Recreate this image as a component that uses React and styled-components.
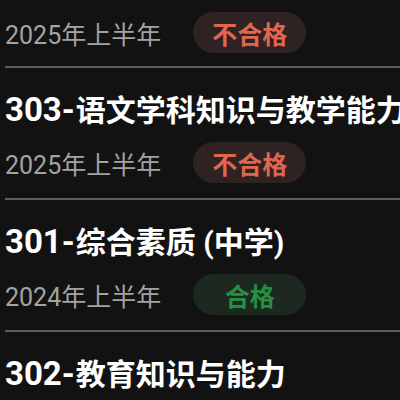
import React from "react";
import styled, { createGlobalStyle } from "styled-components";

const Global = createGlobalStyle`
  html, body {
    margin: 0;
    padding: 0;
    background: #121212;
  }
  body {
    width: 400px;
    height: 400px;
    overflow: hidden;
    font-family: Roboto, "Noto Sans CJK SC", sans-serif;
  }
`;

const List = styled.div`
  display: flex;
  flex-direction: column;
  margin-left: 5px;
`;

const Item = styled.div`
  display: flex;
  flex-direction: column;
  padding: ${(p) => (p.$partial ? "12px 0 13px" : "20px 0 15px")};
  border-bottom: 2px solid #5c5c5c;
`;

const Title = styled.div`
  font-family: Roboto, "Noto Sans CJK SC", sans-serif;
  font-size: 30px;
  font-weight: 700;
  line-height: 44px;
  height: 44px;
  color: #ffffff;
  white-space: nowrap;
  margin-bottom: 10px;
`;

const Code = styled.span`
  font-size: 33px;
  margin-right: 1px;
`;

const Meta = styled.div`
  display: flex;
  align-items: center;
  gap: 32px;
  height: 41px;
`;

const Year = styled.span`
  font-family: Roboto, "Noto Sans CJK SC", sans-serif;
  font-size: 25px;
  font-weight: 400;
  color: #a3a3a3;
  white-space: nowrap;
  margin-top: 1px;
`;

const Badge = styled.span`
  display: flex;
  align-items: center;
  justify-content: center;
  width: 113px;
  height: 41px;
  border-radius: 21px;
  font-family: "Noto Sans CJK SC", sans-serif;
  font-size: 25px;
  font-weight: 700;
  background: ${(p) => (p.$pass ? "#1d2920" : "#2f2223")};
  color: ${(p) => (p.$pass ? "#239140" : "#e2664f")};
`;

const items = [
  { code: null, name: null, year: "2025年上半年", pass: false },
  { code: "303-", name: "语文学科知识与教学能力", year: "2025年上半年", pass: false },
  { code: "301-", name: "综合素质 (中学)", year: "2024年上半年", pass: true },
  { code: "302-", name: "教育知识与能力", year: "", pass: null },
];

export default function App() {
  return (
    <>
      <Global />
      <List>
        {items.map((it, i) => (
          <Item key={i} $partial={!it.code}>
            {it.code && (
              <Title>
                <Code>{it.code}</Code>
                {it.name}
              </Title>
            )}
            {it.pass !== null && (
              <Meta>
                <Year>{it.year}</Year>
                <Badge $pass={it.pass}>{it.pass ? "合格" : "不合格"}</Badge>
              </Meta>
            )}
          </Item>
        ))}
      </List>
    </>
  );
}
